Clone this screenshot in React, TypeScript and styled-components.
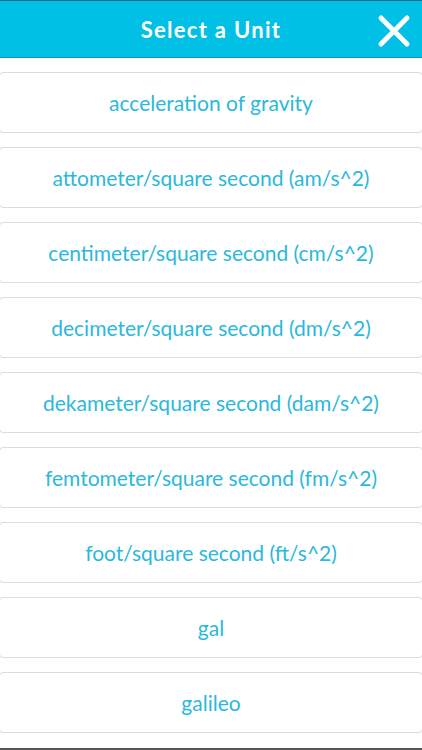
import React from 'react';
import styled, { createGlobalStyle } from 'styled-components';

const GlobalStyle = createGlobalStyle`
  html, body {
    margin: 0;
    padding: 0;
    background: #ffffff;
    font-family: Lato, "Open Sans", sans-serif;
  }
`;

const Screen = styled.div`
  width: 422px;
  height: 750px;
  overflow: hidden;
  display: flex;
  flex-direction: column;
  background: #ffffff;
  border-bottom: 2px solid #555;
  box-sizing: border-box;
`;

const Header = styled.header`
  position: relative;
  flex: none;
  height: 58px;
  box-sizing: border-box;
  background: #00c0e6;
  border-top: 1px solid #0b6f88;
  border-bottom: 1px solid #0a9ac0;
  display: flex;
  align-items: center;
  justify-content: center;
`;

const Title = styled.h1`
  margin: 0;
  color: #ffffff;
  font-size: 22px;
  font-weight: 700;
  letter-spacing: 1.3px;
`;

const CloseButton = styled.button`
  position: absolute;
  right: 10px;
  top: 12px;
  width: 36px;
  height: 36px;
  padding: 0;
  border: none;
  background: transparent;
  display: flex;
  align-items: center;
  justify-content: center;
`;

const List = styled.ul`
  list-style: none;
  margin: 0 -1px;
  padding: 14px 0 0;
  display: flex;
  flex-direction: column;
  gap: 14px;
`;

const Item = styled.li`
  flex: none;
  height: 61px;
  box-sizing: border-box;
  border: 1.5px solid #dcdcdc;
  border-radius: 4px;
  display: flex;
  align-items: center;
  justify-content: center;
  color: #2bb8dc;
  font-size: 21px;
`;

const units = [
  'acceleration of gravity',
  'attometer/square second (am/s^2)',
  'centimeter/square second (cm/s^2)',
  'decimeter/square second (dm/s^2)',
  'dekameter/square second (dam/s^2)',
  'femtometer/square second (fm/s^2)',
  'foot/square second (ft/s^2)',
  'gal',
  'galileo',
];

const App: React.FC = () => {
  return (
    <>
      <GlobalStyle />
      <Screen>
        <Header>
          <Title>Select a Unit</Title>
          <CloseButton aria-label="Close">
            <svg width="34" height="34" viewBox="0 0 34 34">
              <path
                d="M4 4 L30 30 M30 4 L4 30"
                stroke="#ffffff"
                strokeWidth="5"
                strokeLinecap="round"
              />
            </svg>
          </CloseButton>
        </Header>
        <List>
          {units.map(u => (
            <Item key={u}>{u}</Item>
          ))}
        </List>
      </Screen>
    </>
  );
};

export default App;
